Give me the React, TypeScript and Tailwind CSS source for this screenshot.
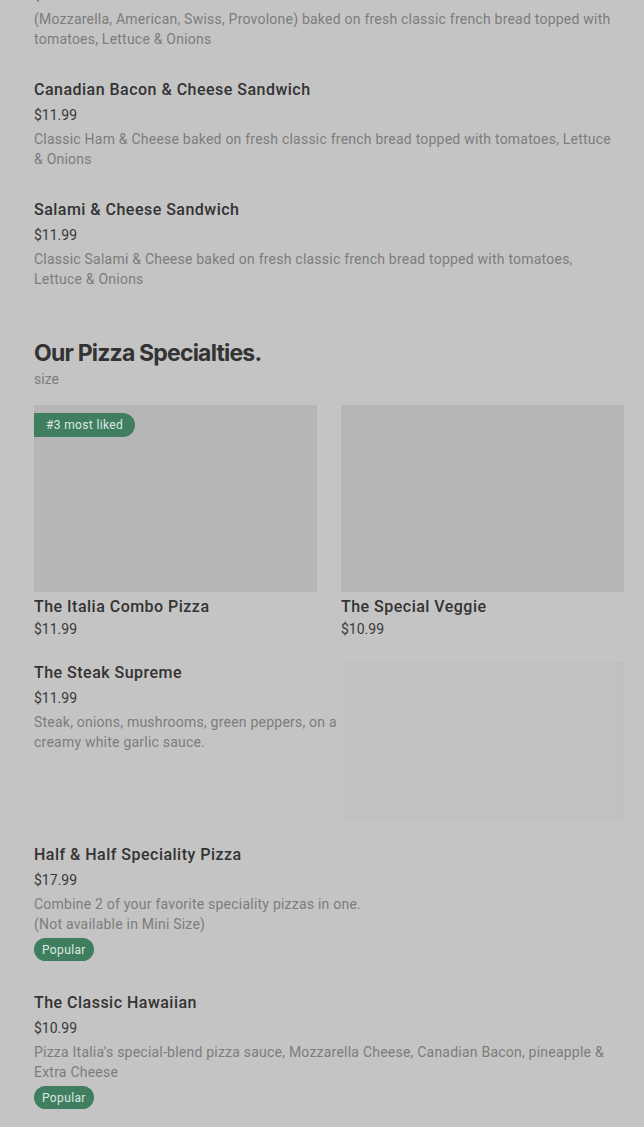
const sandwiches = [
  {
    name: "4 Cheese Sandwich",
    price: "$11.99",
    desc: "(Mozzarella, American, Swiss, Provolone) baked on fresh classic french bread topped with tomatoes, Lettuce & Onions",
  },
  {
    name: "Canadian Bacon & Cheese Sandwich",
    price: "$11.99",
    desc: "Classic Ham & Cheese baked on fresh classic french bread topped with tomatoes, Lettuce & Onions",
  },
  {
    name: "Salami & Cheese Sandwich",
    price: "$11.99",
    desc: "Classic Salami & Cheese baked on fresh classic french bread topped with tomatoes, Lettuce & Onions",
  },
];

function ItemText({ name, price, desc }: { name: string; price: string; desc?: React.ReactNode }) {
  return (
    <>
      <h3 className="text-[16px] leading-[24px] font-medium tracking-[0.03em] text-[#333333]">{name}</h3>
      <div className="mt-[3px] text-[14px] leading-[20px] text-[#3a3a3a]">{price}</div>
      {desc && (
        <p className="mt-[4px] max-w-[580px] text-[14px] leading-[20px] tracking-[0.016em] text-[#7c7c7c]">{desc}</p>
      )}
    </>
  );
}

function Popular() {
  return (
    <span className="mt-[4px] inline-flex h-[23px] items-center rounded-full bg-[#3f7f5f] px-2 text-[12px] tracking-[0.03em] text-[#dde8e1]">
      Popular
    </span>
  );
}

export default function App() {
  return (
    <div
      className="min-h-[1127px] overflow-hidden bg-[#c4c4c4] pl-[34px] pr-[20px]"
      style={{ fontFamily: "Roboto, 'Liberation Sans', sans-serif" }}
    >
      <div className="-mt-[42px] flex flex-col gap-[29px]">
        {sandwiches.map((s) => (
          <div key={s.name}>
            <ItemText {...s} />
          </div>
        ))}
      </div>

      <h2
        className="mt-[48px] text-[23px] leading-[32px] font-bold tracking-[-0.035em] text-[#333333]"
        style={{ fontFamily: "Inter, sans-serif" }}
      >
        Our Pizza Specialties.
      </h2>
      <div className="text-[14px] leading-[20px] text-[#7c7c7c]">size</div>

      <div className="mt-[16px] grid grid-cols-2 gap-[24px]">
        <div>
          <div className="relative h-[187px] bg-[#b6b6b6]">
            <span className="absolute left-0 top-[8px] flex h-[24px] items-center rounded-r-full bg-[#3f7f5f] pl-[12px] pr-[12px] text-[12px] tracking-[0.03em] text-[#dde8e1]">
              #3 most liked
            </span>
          </div>
          <div className="mt-[3px]">
            <h3 className="text-[16px] leading-[24px] font-medium tracking-[0.03em] text-[#333333]">The Italia Combo Pizza</h3>
            <div className="text-[14px] leading-[20px] text-[#3a3a3a]">$11.99</div>
          </div>
        </div>
        <div>
          <div className="h-[187px] bg-[#b6b6b6]" />
          <div className="mt-[3px]">
            <h3 className="text-[16px] leading-[24px] font-medium tracking-[0.03em] text-[#333333]">The Special Veggie</h3>
            <div className="text-[14px] leading-[20px] text-[#3a3a3a]">$10.99</div>
          </div>
        </div>
      </div>

      <div className="mt-[22px] flex">
        <div className="flex-1 pr-1">
          <ItemText
            name="The Steak Supreme"
            price="$11.99"
            desc="Steak, onions, mushrooms, green peppers, on a creamy white garlic sauce."
          />
        </div>
        <div className="mt-[1px] h-[158px] w-[279px] border border-[#bfbfbf] bg-[#c1c1c1]" />
      </div>

      <div className="mt-[23px]">
        <ItemText
          name="Half & Half Speciality Pizza"
          price="$17.99"
          desc={
            <>
              Combine 2 of your favorite speciality pizzas in one.
              <br />
              (Not available in Mini Size)
            </>
          }
        />
        <Popular />
      </div>

      <div className="mt-[30px]">
        <ItemText
          name="The Classic Hawaiian"
          price="$10.99"
          desc="Pizza Italia's special-blend pizza sauce, Mozzarella Cheese, Canadian Bacon, pineapple & Extra Cheese"
        />
        <Popular />
      </div>
    </div>
  );
}
